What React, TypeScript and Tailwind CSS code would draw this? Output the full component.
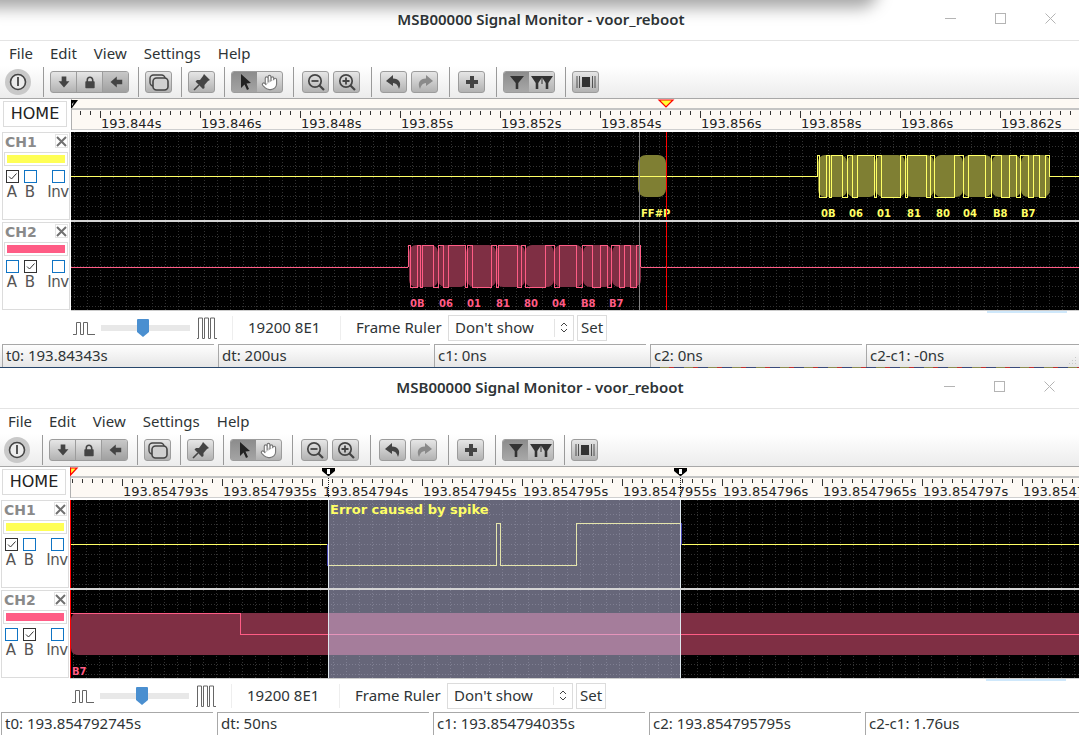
import React from "react";
import { Hand } from "lucide-react";

const UI = "font-['Noto_Sans','Open_Sans',sans-serif]";
const DV = "'DejaVu Sans', sans-serif";
const YEL = "#ffff66";
const PNK = "#ff5c85";
const W = 1009;
const EDGES = [0, 2, 9, 12, 14, 25, 30, 35, 40, 57, 59, 64, 83, 88, 90, 109, 113, 117, 137, 146, 151, 168, 174, 184, 192, 199, 203, 211, 216, 222, 228, 232];
const FRAMES = [0, 29, 58, 87, 116, 145, 174, 203, 232];
const BYTES = ["0B", "06", "01", "81", "80", "04", "B8", "B7"];

function Grid() {
  const xs = Array.from({ length: 78 }, (_, i) => 3 + i * 13);
  const ys = Array.from({ length: 9 }, (_, i) => 4 + i * 10);
  return (
    <g stroke="#333" strokeDasharray="1 2" shapeRendering="crispEdges">
      {xs.map((x) => <line key={"v" + x} x1={x + 0.5} x2={x + 0.5} y1={0} y2={88} />)}
      {ys.map((y) => <line key={"h" + y} x1={0} x2={W} y1={y + 0.5} y2={y + 0.5} />)}
    </g>
  );
}

function Burst({ x, color, fill, labelOffsets }: { x: number; color: string; fill: string; labelOffsets: number[] }) {
  let d = `M${x + 0.5} 44.5 V23.5`;
  let high = true;
  EDGES.slice(1).forEach((e) => {
    d += ` H${x + e + 0.5}`;
    if (e !== 232) {
      high = !high;
      d += ` V${high ? 23.5 : 65.5}`;
    }
  });
  d += " V44.5";
  return (
    <g>
      {FRAMES.slice(0, 8).map((f, i) => (
        <rect key={f} x={x + f + 1} y={23} width={29} height={42} rx={7} fill={fill} />
      ))}
      <path d={d} fill="none" stroke={color} shapeRendering="crispEdges" />
      {BYTES.map((b, i) => (
        <text key={b + i} x={x + labelOffsets[i]} y={85} fontFamily={DV} fontWeight={700} fontSize={10} fill={color}>{b}</text>
      ))}
    </g>
  );
}

function Lane({ children }: { children: React.ReactNode }) {
  return (
    <svg width={W} height={88} className="block bg-black shrink-0">
      <Grid />
      {children}
    </svg>
  );
}

function A1() {
  return (
    <Lane>
      <rect x={567} y={23} width={28} height={42} rx={8} fill="#7f7f33" />
      <line x1={0} x2={746} y1={44.5} y2={44.5} stroke={YEL} shapeRendering="crispEdges" />
      <line x1={978} x2={W} y1={44.5} y2={44.5} stroke={YEL} shapeRendering="crispEdges" />
      <Burst x={746} color={YEL} fill="#7f7f33" labelOffsets={[4, 32, 60, 90, 119, 146, 176, 204]} />
      <text x={570} y={85} fontFamily={DV} fontWeight={700} fontSize={10} fill={YEL}>FF#P</text>
      <line x1={568.5} x2={568.5} y1={0} y2={88} stroke="#808080" shapeRendering="crispEdges" />
      <line x1={595.5} x2={595.5} y1={0} y2={88} stroke="#ff0000" shapeRendering="crispEdges" />
    </Lane>
  );
}

function A2() {
  return (
    <Lane>
      <line x1={0} x2={337} y1={45.5} y2={45.5} stroke={PNK} shapeRendering="crispEdges" />
      <line x1={569} x2={W} y1={45.5} y2={45.5} stroke={PNK} shapeRendering="crispEdges" />
      <Burst x={337} color={PNK} fill="#7f2f44" labelOffsets={[2, 31, 59, 88, 116, 144, 173, 201]} />
      <line x1={568.5} x2={568.5} y1={0} y2={88} stroke="#808080" shapeRendering="crispEdges" />
      <line x1={595.5} x2={595.5} y1={0} y2={88} stroke="#ff0000" shapeRendering="crispEdges" />
    </Lane>
  );
}

function Selection() {
  return (
    <g shapeRendering="crispEdges">
      <rect x={258} y={0} width={352} height={88} fill="#ccccf2" opacity={0.5} />
      <line x1={258.5} x2={258.5} y1={0} y2={88} stroke="#dfe8ee" />
      <line x1={610.5} x2={610.5} y1={0} y2={88} stroke="#dfe8ee" />
    </g>
  );
}

function B1() {
  return (
    <Lane>
      <path d="M0 44.5 H258.5" stroke={YEL} fill="none" shapeRendering="crispEdges" />
      <path d="M258.5 65.5 H426.5 V23.5 H430.5 V65.5 H506.5 V23.5 H610.5" stroke={YEL} fill="none" shapeRendering="crispEdges" />
      <path d="M610.5 44.5 H1009" stroke={YEL} fill="none" shapeRendering="crispEdges" />
      <Selection />
      <line x1={257.5} x2={257.5} y1={44} y2={66} stroke="#4040b0" shapeRendering="crispEdges" />
      <line x1={611.5} x2={611.5} y1={23} y2={45} stroke="#4040b0" shapeRendering="crispEdges" />
      <text x={260} y={14} fontFamily={DV} fontWeight={700} fontSize={13} fill={YEL}>Error caused by spike</text>
      <line x1={0.5} x2={0.5} y1={0} y2={88} stroke="#ff0000" shapeRendering="crispEdges" />
    </Lane>
  );
}

function B2() {
  return (
    <Lane>
      <path d="M8 23 H1009 V65 H8 Q1 65 1 58 V30 Q1 23 8 23 Z" fill="#7f2f44" />
      <path d="M1 23.5 H170.5 V44.5 H1009" stroke={PNK} fill="none" shapeRendering="crispEdges" />
      <Selection />
      <text x={2} y={85} fontFamily={DV} fontWeight={700} fontSize={10} fill={PNK}>B7</text>
      <line x1={0.5} x2={0.5} y1={0} y2={88} stroke="#ff0000" shapeRendering="crispEdges" />
    </Lane>
  );
}

function Ruler({ start, labels, markers }: { start: number; labels: string[]; markers: React.ReactNode }) {
  const ticks = Array.from({ length: 102 }, (_, i) => (start % 10) + i * 10);
  return (
    <svg width={W} height={31} className="block shrink-0">
      <rect x={0} y={0} width={W} height={31} fill="#fdf9f4" />
      <rect x={0} y={9} width={W} height={2} fill="#c4c4c4" />
      <line x1={0} x2={W} y1={30.5} y2={30.5} stroke="#cfcfcf" shapeRendering="crispEdges" />
      <line x1={0.5} x2={0.5} y1={0} y2={31} stroke="#b0b0b0" shapeRendering="crispEdges" />
      <g stroke="#333" shapeRendering="crispEdges">
        {ticks.map((x) => {
          const major = (x - start) % 100 === 0;
          return <line key={x} x1={x + 0.5} x2={x + 0.5} y1={12} y2={major ? 19 : 16} />;
        })}
      </g>
      {labels.map((l, i) => (
        <text key={l} x={start + 1 + i * 100} y={29} fontFamily={DV} fontSize={13} fill="#222">{l}</text>
      ))}
      {markers}
    </svg>
  );
}

function Cursor({ x }: { x: number }) {
  return (
    <g>
      <polygon points={`${x - 6},1 ${x + 7},1 ${x + 7},4 ${x + 1},9 ${x},9 ${x - 6},4`} fill="#000" />
      <rect x={x - 1} y={2} width={3} height={5} fill="#fff" />
      <line x1={x + 0.5} x2={x + 0.5} y1={11} y2={31} stroke="#222" strokeDasharray="1 1" shapeRendering="crispEdges" />
    </g>
  );
}

const M1 = (
  <g>
    <polygon points="0,1 7,1 1,9 0,9" fill="#000" />
    <polygon points="1,5 3,3 1,7" fill="#fff" />
    <polygon points="588,1 602,1 595,8" fill="#ffff33" stroke="#ff0000" strokeWidth={1.2} />
  </g>
);
const M2 = (
  <g>
    <polygon points="0.5,1 7,1 0.5,8" fill="#ffff33" stroke="#ff0000" strokeWidth={1.2} />
    <Cursor x={258} />
    <Cursor x={610} />
  </g>
);

function Check({ on }: { on?: boolean }) {
  return (
    <span className={`block w-[13px] h-[13px] border ${on ? "border-[#333]" : "border-[#0f74c4]"} bg-white`}>
      {on && (
        <svg viewBox="0 0 11 11" width={11} height={11} className="block">
          <path d="M2 5.5 L4.5 8 L9.5 2.5" fill="none" stroke="#333" strokeWidth={1} />
        </svg>
      )}
    </span>
  );
}

function ChannelPanel({ name, color, a }: { name: string; color: string; a?: boolean }) {
  return (
    <div className="w-[71px] shrink-0 pl-[2px] pr-[1px] bg-white">
      <div className="h-[88px] border border-[#dcdcdc] pt-[1px]">
        <div className="flex justify-between pl-[2px] pr-[1px] h-[16px]">
          <span className="text-[14px] leading-[16px] font-bold text-[#8a8a8a] font-['DejaVu_Sans',sans-serif]">{name}</span>
          <span className="w-[13px] h-[14px] border border-[#e4e4e4] flex items-center justify-center">
            <svg viewBox="0 0 11 11" width={11} height={11}>
              <path d="M1 1 L10 10 M10 1 L1 10" stroke="#707070" strokeWidth={2} />
            </svg>
          </span>
        </div>
        <div className="mx-[1px] mt-[2px] h-[14px] border border-[#dcdcdc] p-[2px]">
          <div className="h-full" style={{ background: color }} />
        </div>
        <div className="flex mt-[4px] text-[15px] leading-[18px] text-[#555] font-['DejaVu_Sans',sans-serif]">
          <div className="w-[18px] flex flex-col items-center">
            <Check on={a} />
            <span>A</span>
          </div>
          <div className="w-[18px] flex flex-col items-center">
            <Check on={!a} />
            <span>B</span>
          </div>
          <div className="ml-[9px] w-[20px] flex flex-col items-center">
            <Check />
            <span className="tracking-[-0.5px]">Inv</span>
          </div>
        </div>
      </div>
    </div>
  );
}

const BTN = "h-[22px] border border-[#9c9c9c] rounded-[3px] bg-linear-to-b from-[#e6e6e6] to-[#b2b2b2] flex items-center justify-center";
const SEG = "h-full flex items-center justify-center";

function Sep({ ml }: { ml: string }) {
  return <span className={`${ml} w-px h-[30px] bg-[#9a9a9a] shrink-0`} />;
}

function Ic({ children, w = 18, vb = "0 0 18 18" }: { children: React.ReactNode; w?: number; vb?: string }) {
  return <svg viewBox={vb} width={w} height={18} className="block">{children}</svg>;
}

const Zoom = ({ plus }: { plus?: boolean }) => (
  <Ic>
    <circle cx={8} cy={8} r={6.2} fill="none" stroke="#444" strokeWidth={1.7} />
    <path d="M12.5 12.5 L17 17" stroke="#444" strokeWidth={2.2} />
    <path d={plus ? "M4.5 8 H11.5 M8 4.5 V11.5" : "M4.5 8 H11.5"} stroke="#444" strokeWidth={1.8} />
  </Ic>
);

function Funnel({ x, s = 1 }: { x: number; s?: number }) {
  return <path d={`M${x - 7 * s} 3 H${x + 7 * s} L${x + 1.3} 10 V16 H${x - 1.3} V10 Z`} fill="#333" />;
}

function Toolbar() {
  return (
    <div className="h-[33px] flex items-center border-b border-[#a8a8a8] bg-linear-to-b from-white to-[#ececec]">
      <span className="ml-[5px] w-[26px] h-[26px] rounded-full bg-[#c9c9c9] flex items-center justify-center shrink-0">
        <svg viewBox="0 0 18 18" width={18} height={18}>
          <circle cx={9} cy={9} r={7.5} fill="#ececec" stroke="#444" strokeWidth={1.6} />
          <path d="M9 4 V13" stroke="#444" strokeWidth={1.8} />
        </svg>
      </span>
      <Sep ml="ml-[12px]" />
      <div className={`${BTN} ml-[6px] w-[79px] overflow-hidden`}>
        <span className={`${SEG} w-[26px] border-r border-[#9c9c9c]`}><Ic w={14}><path d="M6 2 H12 V8 H16 L9 16 L2 8 H6 Z" fill="#444" /></Ic></span>
        <span className={`${SEG} w-[26px] border-r border-[#9c9c9c]`}>
          <Ic w={14}><rect x={3} y={8} width={12} height={9} rx={1} fill="#444" /><path d="M5.5 9 V6.5 a3.5 3.5 0 0 1 7 0 V9" fill="none" stroke="#444" strokeWidth={2} /></Ic>
        </span>
        <span className={`${SEG} flex-1 bg-linear-to-b from-[#c8c8c8] to-[#a0a0a0]`}><Ic w={14}><path d="M2 9 L10 2 V6 H17 V12 H10 V16 Z" fill="#444" /></Ic></span>
      </div>
      <Sep ml="ml-[9px]" />
      <div className={`${BTN} ml-[6px] w-[27px]`}>
        <Ic w={22} vb="0 0 22 18">
          <rect x={2} y={2} width={15} height={11} rx={3.5} fill="none" stroke="#444" strokeWidth={1.4} />
          <rect x={5} y={5} width={15} height={12} rx={3.5} fill="#d0d0d0" stroke="#444" strokeWidth={1.6} />
        </Ic>
      </div>
      <Sep ml="ml-[9px]" />
      <div className={`${BTN} ml-[6px] w-[27px]`}>
        <Ic w={20} vb="0 0 18 18">
          <path d="M11 1 L17 7 L15 8 L11.5 12 L11.5 15 L10 16 L2.5 8.5 L4 7 L7 7 L10 3 Z" fill="#444" />
          <path d="M6 12 L1 17" stroke="#444" strokeWidth={1.6} />
        </Ic>
      </div>
      <Sep ml="ml-[9px]" />
      <div className={`${BTN} ml-[6px] w-[52px] overflow-hidden`}>
        <span className={`${SEG} w-[25px] bg-linear-to-b from-[#8c8c8c] to-[#a4a4a4]`}>
          <Ic><path d="M5 1 V15 L8.5 11.5 L11 17 L13 16 L10.5 10.5 L15 10 Z" fill="#222" /></Ic>
        </span>
        <span className={`${SEG} flex-1`}><Hand size={17} fill="#fff" stroke="#777" strokeWidth={1.6} /></span>
      </div>
      <Sep ml="ml-[10px]" />
      <div className={`${BTN} ml-[8px] w-[27px]`}><Zoom /></div>
      <div className={`${BTN} ml-[4px] w-[27px]`}><Zoom plus /></div>
      <Sep ml="ml-[11px]" />
      <div className={`${BTN} ml-[8px] w-[27px]`}>
        <Ic><path d="M8 2 L1 8 L8 13 V10 C11 10 13 12 14 16 C17 10 14 5.5 8 5.5 Z" fill="#444" /></Ic>
      </div>
      <div className={`${BTN} ml-[4px] w-[27px]`}>
        <Ic><path d="M10 2 L17 8 L10 13 V10 C7 10 5 12 4 16 C1 10 4 5.5 10 5.5 Z" fill="#8a8a8a" /></Ic>
      </div>
      <Sep ml="ml-[11px]" />
      <div className={`${BTN} ml-[8px] w-[27px]`}>
        <Ic><path d="M7 3 H11 V7 H15 V11 H11 V15 H7 V11 H3 V7 H7 Z" fill="#444" /></Ic>
      </div>
      <Sep ml="ml-[11px]" />
      <div className={`${BTN} ml-[6px] w-[52px] overflow-hidden`}>
        <span className={`${SEG} w-[25px] bg-linear-to-b from-[#8c8c8c] to-[#a8a8a8]`}><Ic><Funnel x={9} /></Ic></span>
        <span className={`${SEG} flex-1 bg-linear-to-b from-[#d8d8d8] to-[#b4b4b4]`}>
          <Ic w={22} vb="0 0 22 18"><Funnel x={6} s={0.85} /><Funnel x={16} s={0.85} /><path d="M11 3 V11" stroke="#333" strokeWidth={1} /></Ic>
        </span>
      </div>
      <Sep ml="ml-[10px]" />
      <div className={`${BTN} ml-[6px] w-[27px]`}>
        <Ic w={20} vb="0 0 20 18">
          <path d="M1 3 V15 M3.5 3 V15 M16.5 3 V15 M19 3 V15" stroke="#444" strokeWidth={0.9} />
          <rect x={6} y={4} width={8} height={10} fill="#333" />
        </Ic>
      </div>
    </div>
  );
}

function SquareWave({ w, h, d }: { w: number; h: number; d: string }) {
  return (
    <svg width={w} height={h} viewBox={`0 0 ${w} ${h}`} className="block shrink-0">
      <path d={d} fill="none" stroke="#666" strokeWidth={1} />
    </svg>
  );
}

function Controls() {
  return (
    <div className="relative h-[33px] flex items-center text-[15px] text-[#2e3436] bg-white">
      <span className="absolute top-0 left-[987px] w-[80px] h-[2px] bg-[#cfe8fb]" />
      <div className="ml-[73px]">
        <SquareWave w={22} h={14} d="M0 13.5 H3.5 V1.5 H7.5 V13.5 H10.5 V1.5 H14.5 V13.5 H22" />
      </div>
      <div className="relative ml-[6px] w-[89px] h-[6px] bg-[#e8e8e8] shrink-0">
        <svg width={12} height={18} viewBox="0 0 12 18" className="absolute left-[36px] top-[-6px]">
          <path d="M1 0 H11 Q12 0 12 1 V13 L6 18 L0 13 V1 Q0 0 1 0 Z" fill="#4a8fd0" />
        </svg>
      </div>
      <div className="ml-[7px]">
        <SquareWave w={20} h={22} d="M0 21.5 H1.5 V1 H5.5 V21.5 H7.5 V1 H11.5 V21.5 H13.5 V1 H17.5 V21.5 H20" />
      </div>
      <span className="ml-[15px] w-px h-[24px] bg-[#eeeeee]" />
      <span className="ml-[15px] w-[77px] whitespace-nowrap">19200 8E1</span>
      <span className="ml-[15px] w-px h-[24px] bg-[#eeeeee]" />
      <span className="ml-[15px] w-[85px] whitespace-nowrap">Frame Ruler</span>
      <div className="ml-[7px] w-[126px] h-[26px] border border-[#dcdcdc] flex items-center pl-[6px]">
        <span className="flex-1 whitespace-nowrap">Don't show</span>
        <span className="w-[19px] h-[18px] border-l border-[#e4e4e4] flex items-center justify-center">
          <svg width={8} height={13} viewBox="0 0 8 13">
            <path d="M1 5 L4 2 L7 5 M1 8 L4 11 L7 8" fill="none" stroke="#444" strokeWidth={1} />
          </svg>
        </span>
      </div>
      <span className="ml-[3px] w-[30px] h-[26px] border border-[#dcdcdc] flex items-center justify-center">Set</span>
    </div>
  );
}

function Status({ vals, fade }: { vals: string[]; fade?: boolean }) {
  return (
    <div className={`h-[23px] flex pl-[2px] gap-[4px] text-[15px] text-[#2e3436] ${fade ? "bg-linear-to-b from-white to-[#e6e6e6]" : "bg-white"}`}>
      {vals.map((v, i) => (
        <div key={v} className={`${i === 4 ? "flex-1" : "w-[212px]"} border-t border-l border-[#a8a8a8] pl-[3px] leading-[21px] whitespace-nowrap relative`}>
          {v}
          {i === 4 && fade && (
            <svg width={12} height={12} className="absolute right-[2px] bottom-0">
              <g fill="#c8c8c8">
                <rect x={9} y={2} width={1} height={1} /><rect x={6} y={5} width={1} height={1} /><rect x={9} y={5} width={1} height={1} />
                <rect x={3} y={8} width={1} height={1} /><rect x={6} y={8} width={1} height={1} /><rect x={9} y={8} width={1} height={1} />
              </g>
            </svg>
          )}
        </div>
      ))}
    </div>
  );
}

function Win({ second, ruler, laneA, laneB, status }: { second?: boolean; ruler: React.ReactNode; laneA: React.ReactNode; laneB: React.ReactNode; status: string[] }) {
  return (
    <div className={`${second ? "ml-[-1px]" : ""} w-[1080px] shrink-0 bg-white ${UI}`}>
      <div className="h-[41px] relative flex items-center justify-center border-b border-[#e4e4e4] pb-[1px]">
        <span className="text-[15px] font-semibold text-[#2e3436] pl-[2px]">MSB00000 Signal Monitor - voor_reboot</span>
        <div className="absolute right-[24px] top-[13px] flex items-center gap-[39px]">
          <span className="w-[11px] h-px bg-[#b4b4b4]" />
          <span className="w-[11px] h-[11px] border border-[#b4b4b4]" />
          <svg width={11} height={11} viewBox="0 0 11 11"><path d="M0.5 0.5 L10.5 10.5 M10.5 0.5 L0.5 10.5" stroke="#b4b4b4" /></svg>
        </div>
      </div>
      <div className="h-[25px] flex items-center pl-[9px] gap-[17px] text-[15px] text-[#2e3436]">
        <span>File</span><span>Edit</span><span>View</span><span>Settings</span><span>Help</span>
      </div>
      <Toolbar />
      <div className="h-[33px] flex">
        <div className="w-[71px] shrink-0 pl-[3px] pt-[2px]">
          <div className="w-[64px] h-[26px] border border-[#dcdcdc] flex items-center justify-center text-[16px] text-[#222] font-['DejaVu_Sans',sans-serif]">HOME</div>
        </div>
        {ruler}
      </div>
      <div className="flex h-[88px]">
        <ChannelPanel name="CH1" color="#ffff55" a />
        {laneA}
      </div>
      <div className="h-[2px] ml-[71px] bg-[#d4d4d4]" />
      <div className="flex h-[88px]">
        <ChannelPanel name="CH2" color={PNK} />
        {laneB}
      </div>
      <div className="h-px ml-[71px] bg-[#cccccc]" />
      <Controls />
      <Status vals={status} fade={!second} />
    </div>
  );
}

export default function App() {
  return (
    <div className="relative w-[1079px] h-[737px] overflow-hidden bg-white">
      <Win
        ruler={<Ruler start={29} markers={M1} labels={["193.844s", "193.846s", "193.848s", "193.85s", "193.852s", "193.854s", "193.856s", "193.858s", "193.86s", "193.862s"]} />}
        laneA={<A1 />}
        laneB={<A2 />}
        status={["t0: 193.84343s", "dt: 200us", "c1: 0ns", "c2: 0ns", "c2-c1: -0ns"]}
      />
      <div className="h-px flex">
        <span className="w-[660px] bg-[#27466b]" />
        <span className="flex-1 bg-[repeating-linear-gradient(90deg,#8c8c50_0px,#8c8c50_9px,#c03030_9px,#c03030_14px,#3a4a7a_14px,#3a4a7a_24px)]" />
      </div>
      <Win
        second
        ruler={<Ruler start={52} markers={M2} labels={["193.854793s", "193.8547935s", "193.854794s", "193.8547945s", "193.854795s", "193.8547955s", "193.854796s", "193.8547965s", "193.854797s", "193.8547975s"]} />}
        laneA={<B1 />}
        laneB={<B2 />}
        status={["t0: 193.854792745s", "dt: 50ns", "c1: 193.854794035s", "c2: 193.854795795s", "c2-c1: 1.76us"]}
      />
      <div className="absolute top-[-20px] left-[-20px] w-[890px] h-[20px] rounded-b-[10px] shadow-[0_0_16px_8px_rgba(0,0,0,0.35)]" />
    </div>
  );
}
